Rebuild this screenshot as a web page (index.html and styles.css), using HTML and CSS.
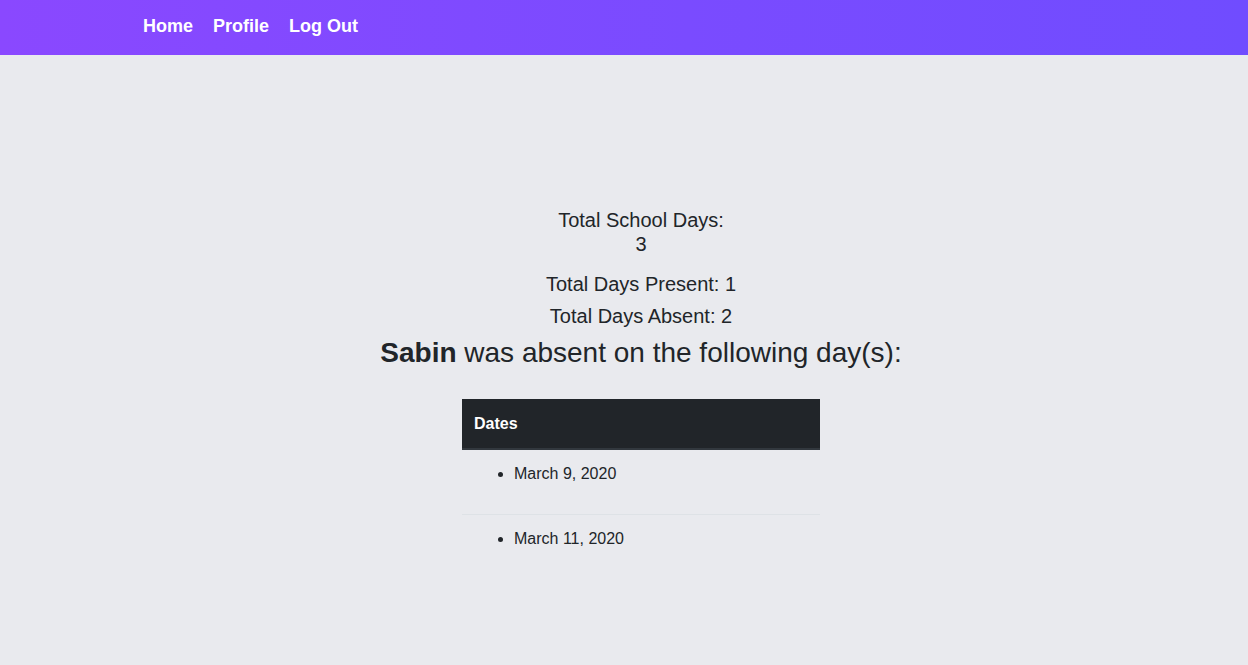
FILE: index.html
```html
<!DOCTYPE html>
<html lang="en">
<head>
<meta charset="utf-8">
<title>Attendance</title>
<link rel="stylesheet" href="styles.css">
</head>
<body>
<nav class="navbar">
  <a class="nav-link" href="#">Home</a>
  <a class="nav-link" href="#">Profile</a>
  <a class="nav-link" href="#">Log Out</a>
</nav>
<main class="content">
  <p class="stat stat-total">Total School Days: 3</p>
  <p class="stat stat-present">Total Days Present: 1</p>
  <p class="stat stat-absent">Total Days Absent: 2</p>
  <h3 class="heading"><strong>Sabin</strong> was absent on the following day(s):</h3>
  <table class="dates-table">
    <thead>
      <tr><th>Dates</th></tr>
    </thead>
    <tbody>
      <tr><td><ul class="date-list"><li>March 9, 2020</li></ul></td></tr>
      <tr><td><ul class="date-list"><li>March 11, 2020</li></ul></td></tr>
    </tbody>
  </table>
</main>
</body>
</html>
```
FILE: styles.css
```css
* { box-sizing: border-box; }
html, body { margin: 0; padding: 0; }
body {
  background: #e9eaee;
  color: #212529;
  font-family: "Liberation Sans", Arial, sans-serif;
  font-size: 16px;
  line-height: 1.5;
  min-height: 665px;
}
.navbar {
  height: 55px;
  background: linear-gradient(90deg, #8a48ff 0%, #7a4bff 55%, #704cff 100%);
  display: flex;
  align-items: center;
  gap: 20px;
  padding-left: 143px;
}
.nav-link {
  color: #ffffff;
  font-weight: 700;
  font-size: 18px;
  text-decoration: none;
  line-height: 1;
  padding-bottom: 3px;
}
.content {
  display: flex;
  flex-direction: column;
  align-items: center;
  padding-top: 153px;
  padding-left: 34px;
}
.stat {
  margin: 0;
  font-size: 20px;
  line-height: 24px;
  text-align: center;
}
.stat-total { width: 172px; margin-bottom: 16px; }
.stat-present { margin-bottom: 8px; }
.heading {
  margin: 8px 0 29px;
  font-size: 28px;
  font-weight: 400;
  line-height: 1.2;
  text-align: center;
}
.heading strong { font-weight: 700; }
.dates-table {
  width: 358px;
  border-collapse: collapse;
}
.dates-table th {
  background: #212529;
  color: #ffffff;
  text-align: left;
  font-weight: 700;
  padding: 13px 12px 12px;
  line-height: 24px;
  border-bottom: 2px solid #32383e;
}
.dates-table td {
  padding: 12px;
  vertical-align: top;
  border-top: 1px solid #dee2e6;
}
.dates-table tbody tr:first-child td { border-top: none; }
.date-list {
  margin: 0 0 16px;
  padding-left: 40px;
}
```
